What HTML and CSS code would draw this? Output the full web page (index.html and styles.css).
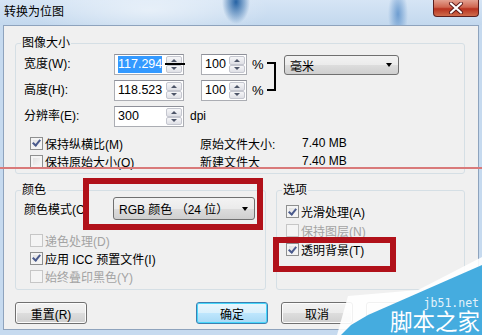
FILE: index.html
```html
<!DOCTYPE html>
<html lang="zh-CN">
<head>
    <meta charset="UTF-8">
    <meta name="viewport" content="width=device-width, initial-scale=1.0">
    <title>转换为位图</title>
    <link rel="stylesheet" href="styles.css">
</head>
<body>
    <div class="window">
        <div class="titlebar">
            <span class="title">转换为位图</span>
            <span class="close">
                <svg width="16" height="12" viewBox="0 0 16 12">
                    <path d="M3 1.5 L13 10.5 M13 1.5 L3 10.5" stroke="#5a1a1a" stroke-width="4" stroke-linecap="round"/>
                    <path d="M3 1.5 L13 10.5 M13 1.5 L3 10.5" stroke="#fff" stroke-width="2.2" stroke-linecap="round"/>
                </svg>
            </span>
        </div>

        <div class="client">
            <fieldset class="group">
                <legend>图像大小</legend>
                <div class="size-grid">
                    <span class="lbl r1">宽度(W):</span>
                    <div class="spin c2 r1">
                        <span class="val"><span class="hl">117.294</span></span>
                        <span class="arrows"><i class="up"></i><i class="down"></i></span>
                        <span class="link-mark"></span>
                    </div>
                    <div class="spin c4 r1">
                        <span class="val">100</span>
                        <span class="arrows"><i class="up"></i><i class="down"></i></span>
                    </div>
                    <span class="pct r1">%</span>
                    <div class="bracket"></div>
                    <div class="select unit">毫米<span class="caret"></span></div>

                    <span class="lbl r2">高度(H):</span>
                    <div class="spin c2 r2">
                        <span class="val">118.523</span>
                        <span class="arrows"><i class="up"></i><i class="down"></i></span>
                    </div>
                    <div class="spin c4 r2">
                        <span class="val">100</span>
                        <span class="arrows"><i class="up"></i><i class="down"></i></span>
                    </div>
                    <span class="pct r2">%</span>

                    <span class="lbl r3">分辨率(E):</span>
                    <div class="spin c2 r3">
                        <span class="val">300</span>
                        <span class="arrows"><i class="up"></i><i class="down"></i></span>
                    </div>
                    <span class="dpi r3">dpi</span>
                </div>

                <div class="info">
                    <label class="check"><span class="cb on"></span>保持纵横比(M)</label>
                    <span>原始文件大小:</span>
                    <span>7.40 MB</span>
                    <label class="check"><span class="cb"></span>保持原始大小(O)</label>
                    <span>新建文件大</span>
                    <span>7.40 MB</span>
                </div>
            </fieldset>

            <div class="lower">
                <fieldset class="group color-group">
                    <legend>颜色</legend>
                    <div class="mode-row">
                        <span class="mode-lbl">颜色模式(C)</span>
                        <div class="select mode">RGB 颜色 （24 位）<span class="caret"></span></div>
                    </div>
                    <div class="checks">
                        <label class="check off"><span class="cb"></span>递色处理(D)</label>
                        <label class="check"><span class="cb on"></span>应用 ICC 预置文件(I)</label>
                        <label class="check off"><span class="cb"></span>始终叠印黑色(Y)</label>
                    </div>
                </fieldset>

                <fieldset class="group opt-group">
                    <legend>选项</legend>
                    <label class="check"><span class="cb on"></span>光滑处理(A)</label>
                    <label class="check off"><span class="cb"></span>保持图层(N)</label>
                    <label class="check"><span class="cb on"></span>透明背景(T)</label>
                </fieldset>
            </div>

            <div class="buttons">
                <button>重置(R)</button>
                <div class="btn-group">
                    <button class="default">确定</button>
                    <button>取消</button>
                    <button>帮助</button>
                </div>
            </div>
        </div>
    </div>

    <!-- annotations drawn over the screenshot -->
    <div class="mark-line"></div>
    <div class="mark-box box-mode"></div>
    <div class="mark-box box-trans"></div>

    <svg class="watermark" width="150" height="80" viewBox="0 0 150 80">
        <polygon points="5,80 16,41 86,35 150,2 150,80" fill="#ffffff" opacity="0.9"/>
        <polygon points="9,80 19,70 36,60 150,10 150,80" fill="#45acdf"/>
        <text x="147" y="52" text-anchor="end" class="wm-url">jb51.net</text>
        <text x="148" y="75" text-anchor="end" class="wm-name">脚本之家</text>
    </svg>
</body>
</html>
```

FILE: styles.css
```css
body {
    margin: 0;
    width: 482px;
    height: 335px;
    overflow: hidden;
    position: relative;
    background: #c6daef;
    font: 12px "Liberation Sans", "Noto Sans CJK SC", sans-serif;
    color: #000;
}
.window {
    height: 335px;
}
.titlebar {
    height: 25px;
    display: flex;
    justify-content: space-between;
    align-items: flex-start;
    background-color: #cddff2;
    background-image:
        radial-gradient(ellipse 14px 22px at 236px 2px, rgba(28,92,160,0.95), rgba(28,92,160,0.4) 60%, rgba(28,92,160,0) 100%),
        radial-gradient(ellipse 10px 26px at 398px 14px, rgba(70,130,195,0.7), rgba(70,130,195,0) 100%),
        radial-gradient(ellipse 120px 30px at 150px 10px, rgba(255,255,255,0.5), rgba(255,255,255,0) 100%),
        linear-gradient(180deg, #d6e5f5, #c3d8ee);
}
.title {
    padding-left: 4px;
    line-height: 25px;
    font-size: 12px;
}
.close {
    width: 46px;
    height: 17px;
    margin-right: 3px;
    box-sizing: border-box;
    border: 1px solid #5b1f1f;
    border-top: none;
    border-radius: 0 0 4px 4px;
    background: linear-gradient(180deg, #e3a090 0%, #cf6650 45%, #b8321f 55%, #cf6c4c 100%);
    display: flex;
    align-items: center;
    justify-content: center;
}
.client {
    margin: 0 3px 0 3px;
    border: 1px solid #8ea3bd;
    background: #f0f0f0;
    padding: 10px 13px 5px 11px;
}

/* group boxes */
.group {
    margin: 0;
    border: 1px solid #d5dfe5;
    border-radius: 3px;
    padding: 0 8px 3px 8px;
}
.group legend {
    padding: 0 1px;
    margin-left: -3px;
    line-height: 14px;
}

/* size section */
.size-grid {
    display: grid;
    grid-template-columns: 90px 70px 17px 46px 20px 9px 8px 115px;
    grid-template-rows: 21px 21px 21px;
    row-gap: 5px;
    padding-top: 4px;
}
.r1 { grid-row: 1; }
.r2 { grid-row: 2; }
.r3 { grid-row: 3; }
.c2 { grid-column: 2; }
.c4 { grid-column: 4; }
.lbl {
    grid-column: 1;
    line-height: 21px;
}
.pct {
    grid-column: 5;
    padding-left: 5px;
    line-height: 21px;
    font-size: 13px;
}
.dpi {
    grid-column: 3 / 6;
    padding-left: 6px;
    line-height: 21px;
}
.bracket {
    grid-column: 6;
    grid-row: 1 / 3;
    margin: 8px 0 10px 0;
    border: 2px solid #000;
    border-left: none;
    width: 7px;
}
.unit {
    grid-column: 8;
    grid-row: 1;
    margin-top: 1px;
    height: 20px;
}

.spin {
    position: relative;
    display: flex;
    height: 21px;
    box-sizing: border-box;
    border: 1px solid #abadb3;
    border-top-color: #8e9099;
    background: #fff;
}
.spin .val {
    flex: 1;
    padding-left: 3px;
    line-height: 19px;
    font-size: 12.5px;
}
.hl {
    background: #3399ff;
    color: #fff;
    padding: 1px 0 2px;
}
.arrows {
    width: 17px;
    display: flex;
    flex-direction: column;
    padding: 1px 1px 1px 0;
    box-sizing: border-box;
}
.arrows i {
    flex: 1;
    border: 1px solid #c4c6cf;
    border-radius: 2px;
    background: linear-gradient(180deg, #f6f6f8, #dfe0e6);
    display: flex;
    align-items: center;
    justify-content: center;
}
.arrows i::after {
    content: "";
    border-left: 3px solid transparent;
    border-right: 3px solid transparent;
}
.arrows .up::after {
    border-bottom: 3px solid #4d5568;
}
.arrows .down::after {
    border-top: 3px solid #4d5568;
}
.link-mark {
    position: absolute;
    right: -2px;
    top: 8px;
    width: 20px;
    height: 2px;
    background: #000;
}

.select {
    display: flex;
    align-items: center;
    justify-content: space-between;
    box-sizing: border-box;
    border: 1px solid #707070;
    border-radius: 3px;
    background: linear-gradient(180deg, #f3f3f3 0%, #ebebeb 50%, #dddddd 51%, #cfcfcf 100%);
    padding: 0 6px 0 5px;
}
.caret {
    border-left: 3px solid transparent;
    border-right: 3px solid transparent;
    border-top: 4px solid #000;
}

.info {
    margin-top: 7px;
    display: grid;
    grid-template-columns: 176px 102px auto;
    grid-auto-rows: 18px;
    align-items: center;
}

/* checkboxes */
.check {
    display: flex;
    align-items: center;
    gap: 2px;
    padding-left: 6px;
    height: 18px;
}
.cb {
    width: 13px;
    height: 13px;
    box-sizing: border-box;
    border: 1px solid #8e8f8f;
    background: linear-gradient(135deg, #dcdcdc, #fbfbfb);
    box-shadow: inset 0 0 0 2px #f4f4f4;
    display: flex;
    align-items: center;
    justify-content: center;
}
.cb.on::after {
    content: "";
    width: 3px;
    height: 6px;
    border: solid #4a5a8c;
    border-width: 0 2px 2px 0;
    transform: translateY(-1px) rotate(40deg);
}
.check.off {
    color: #a3a3a3;
}
.check.off .cb {
    border-color: #c6c6c6;
    background: #f4f4f4;
    box-shadow: none;
}

/* lower groups */
.lower {
    display: flex;
    gap: 10px;
    margin-top: 9px;
}
.color-group {
    width: 251px;
    box-sizing: border-box;
    padding-bottom: 4px;
}
.opt-group {
    flex: 1;
    padding-top: 5px;
}
.opt-group .check {
    padding-left: 1px;
    height: 19px;
}
.mode-row {
    display: flex;
    align-items: center;
    height: 23px;
}
.mode-lbl {
    width: 89px;
}
.mode {
    width: 142px;
    height: 23px;
}
.checks {
    margin-top: 11px;
}

/* bottom buttons */
.buttons {
    display: flex;
    justify-content: space-between;
    margin-top: 12px;
    padding-right: 27px;
}
.btn-group {
    display: flex;
    gap: 13px;
}
button {
    width: 72px;
    height: 22px;
    padding: 0;
    font: 12px "Liberation Sans", "Noto Sans CJK SC", sans-serif;
    color: #000;
    border: 1px solid #707070;
    border-radius: 3px;
    background: linear-gradient(180deg, #f2f2f2 0%, #ebebeb 50%, #dddddd 51%, #cfcfcf 100%);
    box-shadow: inset 0 0 0 1px #fcfcfc;
}
button.default {
    border-color: #3c7fb1;
    background: linear-gradient(180deg, #eaf6fd 0%, #d9f0fc 50%, #bee6fd 51%, #a7d9f5 100%);
    box-shadow: inset 0 0 0 1px #48d7fb;
}

/* annotations */
.mark-line {
    position: absolute;
    left: 0;
    top: 167px;
    width: 482px;
    height: 2px;
    background: #d97a7a;
}
.mark-box {
    position: absolute;
    box-sizing: border-box;
    border: 6px solid #b1111a;
}
.box-mode {
    left: 83px;
    top: 178px;
    width: 180px;
    height: 52px;
}
.box-trans {
    left: 273px;
    top: 237px;
    width: 123px;
    height: 35px;
}
.watermark {
    position: absolute;
    right: 0;
    bottom: 0;
}
.wm-url {
    font: 11.5px "DejaVu Sans Mono", monospace;
    fill: #e3f2fb;
}
.wm-name {
    font: 22.5px "Noto Sans CJK SC", sans-serif;
    fill: #ffffff;
}
```
